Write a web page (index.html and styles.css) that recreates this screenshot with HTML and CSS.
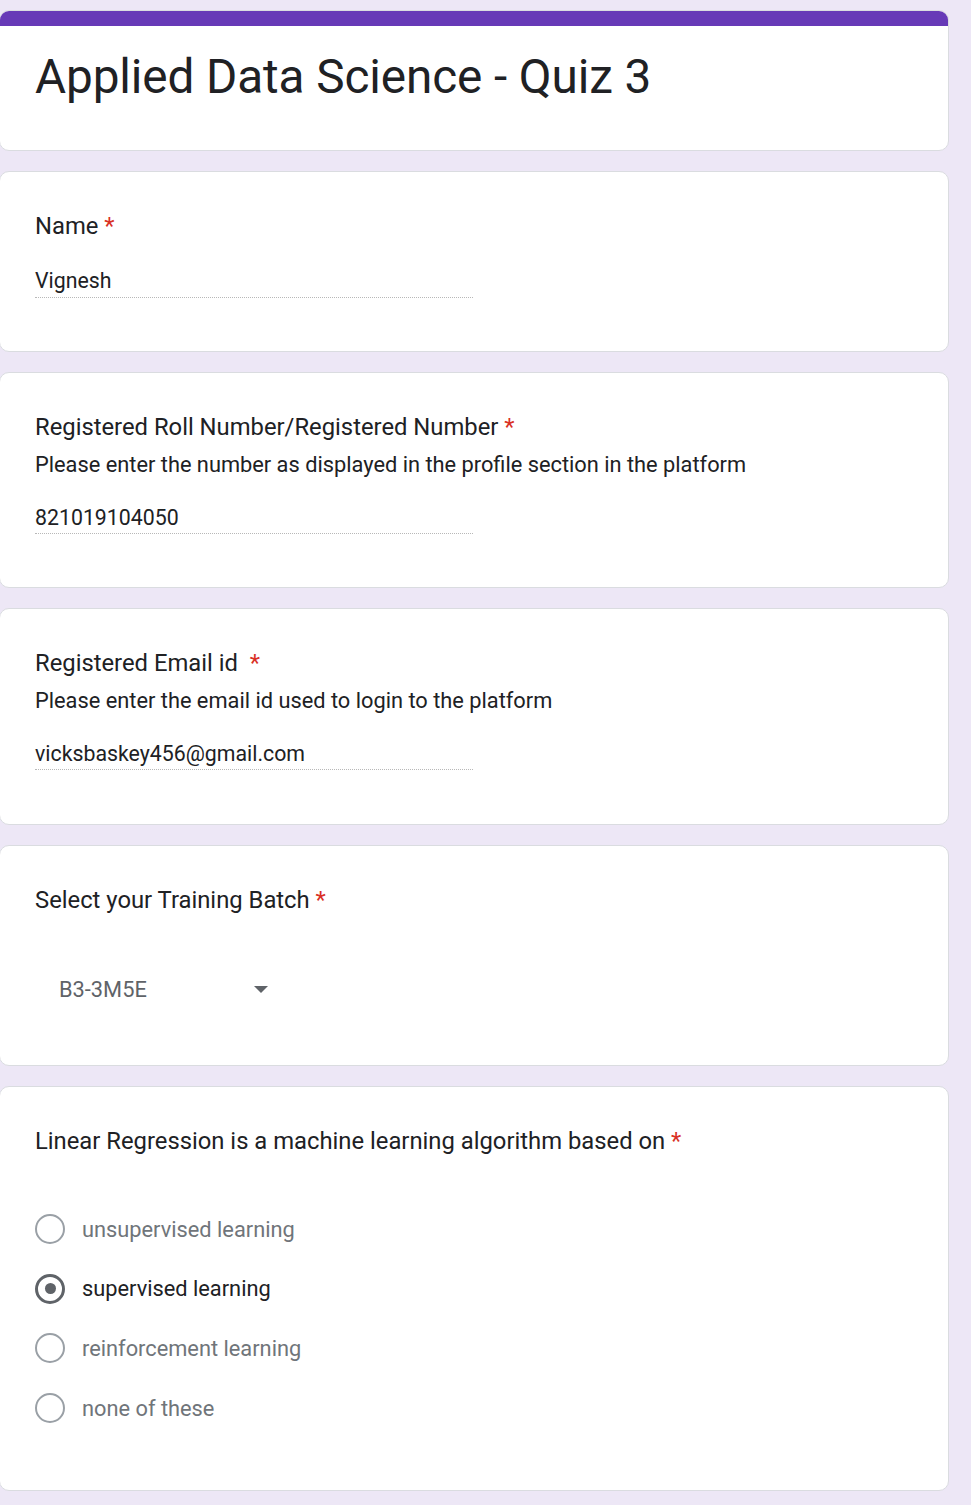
FILE: index.html
```html
<!DOCTYPE html>
<html>
<head>
<meta charset="utf-8">
<link rel="stylesheet" href="styles.css">
</head>
<body>
<div class="form">
  <div class="card header-card">
    <div class="bar"></div>
    <h1 class="title">Applied Data Science - Quiz 3</h1>
  </div>

  <div class="card q q-name">
    <div class="label">Name <span class="req">*</span></div>
    <div class="value">Vignesh</div>
    <div class="underline"></div>
  </div>

  <div class="card q q-desc q-roll">
    <div class="label">Registered Roll Number/Registered Number <span class="req">*</span></div>
    <div class="desc">Please enter the number as displayed in the profile section in the platform</div>
    <div class="value">821019104050</div>
    <div class="underline"></div>
  </div>

  <div class="card q q-desc q-email">
    <div class="label">Registered Email id &nbsp;<span class="req">*</span></div>
    <div class="desc">Please enter the email id used to login to the platform</div>
    <div class="value">vicksbaskey456@gmail.com</div>
    <div class="underline"></div>
  </div>

  <div class="card q q-select">
    <div class="label">Select your Training Batch <span class="req">*</span></div>
    <div class="select">
      <span class="select-text">B3-3M5E</span>
      <span class="arrow"></span>
    </div>
  </div>

  <div class="card q q-radio">
    <div class="label">Linear Regression is a machine learning algorithm based on <span class="req">*</span></div>
    <div class="options">
      <div class="option"><span class="radio"></span><span class="opt-text">unsupervised learning</span></div>
      <div class="option checked"><span class="radio"></span><span class="opt-text">supervised learning</span></div>
      <div class="option"><span class="radio"></span><span class="opt-text">reinforcement learning</span></div>
      <div class="option"><span class="radio"></span><span class="opt-text">none of these</span></div>
    </div>
  </div>
</div>
</body>
</html>
```

FILE: styles.css
```css
html, body {
  margin: 0;
  padding: 0;
  background: #ede7f6;
}
body {
  font-family: Roboto, "Noto Sans", Arial, sans-serif;
  color: #202124;
}
.form {
  width: 950px;
  padding: 10px 0 12px 0;
  display: flex;
  flex-direction: column;
  gap: 20px;
}
.card {
  background: #fff;
  border: 1px solid #dadce0;
  border-radius: 10px;
  box-sizing: border-box;
  width: 950px;
  margin-left: -1px;
  position: relative;
  overflow: hidden;
}
.header-card {
  height: 141px;
}
.bar {
  height: 15px;
  background: #673ab7;
}
.title {
  margin: 0;
  padding: 23px 0 0 35px;
  font-weight: 400;
  font-size: 47.7px;
  line-height: 56px;
  color: #202124;
  letter-spacing: -0.1px;
}
.q {
  padding: 39px 0 0 35px;
}
.label {
  font-size: 23.8px;
  line-height: 30px;
  color: #202124;
}
.req {
  color: #d93025;
}
.desc {
  font-size: 21.8px;
  line-height: 28px;
  margin-top: 9px;
  color: #202124;
}
.value {
  font-size: 21.3px;
  line-height: 28px;
  margin-top: 26px;
  color: #202124;
}
.q-desc .value {
  margin-top: 25px;
}
.underline {
  width: 438px;
  border-bottom: 1px dotted #b8b8b8;
  margin-top: 2px;
}
.q-desc .underline {
  margin-top: 1px;
}
.q-name { height: 181px; }
.q-roll { height: 216px; }
.q-email { height: 217px; }
.q-select { height: 221px; }
.q-radio { height: 405px; }

.select {
  display: flex;
  align-items: center;
  margin-top: 59px;
  padding-left: 24px;
  height: 30px;
}
.select-text {
  font-size: 21.8px;
  color: #5f6368;
  width: 194px;
}
.arrow {
  width: 0;
  height: 0;
  border-left: 7.5px solid transparent;
  border-right: 7.5px solid transparent;
  border-top: 7.5px solid #5f6368;
  margin-left: 1px;
}
.options {
  margin-top: 58px;
  display: flex;
  flex-direction: column;
  gap: 29.7px;
}
.option {
  display: flex;
  align-items: center;
  height: 30px;
}
.radio {
  width: 30px;
  height: 30px;
  box-sizing: border-box;
  border: 2.5px solid #9aa0a6;
  border-radius: 50%;
  margin-right: 17px;
  position: relative;
  flex: none;
}
.option.checked .radio {
  border: 3px solid #5f6368;
}
.option.checked .radio::after {
  content: "";
  position: absolute;
  left: 6.5px;
  top: 6.5px;
  width: 11px;
  height: 11px;
  border-radius: 50%;
  background: #5f6368;
}
.opt-text {
  font-size: 21.8px;
  color: #70757a;
}
.option.checked .opt-text {
  color: #202124;
}
```
